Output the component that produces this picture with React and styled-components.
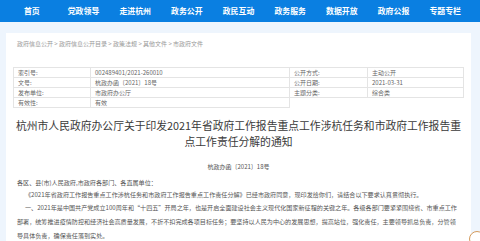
import React from "react";
import styled, { createGlobalStyle } from "styled-components";

const navItems = ["首页", "党政领导", "走进杭州", "政务公开", "政民互动", "政务服务", "数据开放", "政府公报", "专题专栏"];

const leftRows = [
  ["索引号:", "002489401/2021-260010"],
  ["文号:", "杭政办函〔2021〕18号"],
  ["发布单位:", "市政府办公厅"],
  ["有效性:", "有效"],
];

const rightRows = [
  ["公开方式:", "主动公开"],
  ["公开日期:", "2021-03-31"],
  ["主题分类:", "综合类"],
];

export default function App() {
  return (
    <>
      <GlobalStyle />
      <NavBar>
        <NavInner>
          {navItems.map((item) => (
            <NavItem key={item}>{item}</NavItem>
          ))}
        </NavInner>
      </NavBar>
      <Main>
        <Panel>
          <Breadcrumb>政府信息公开 &gt; 政府信息公开目录 &gt; 政策法规 &gt; 其他文件 &gt; 市政府文件</Breadcrumb>
          <MetaWrap>
            <MetaTable>
              <tbody>
                {leftRows.map(([k, v]) => (
                  <tr key={k}>
                    <LabelCell $w={77}>{k}</LabelCell>
                    <ValueCell $w={199}>{v}</ValueCell>
                  </tr>
                ))}
              </tbody>
            </MetaTable>
            <MetaTable $side>
              <tbody>
                {rightRows.map(([k, v]) => (
                  <tr key={k}>
                    <LabelCell $w={78}>{k}</LabelCell>
                    <ValueCell $w={96}>{v}</ValueCell>
                  </tr>
                ))}
              </tbody>
            </MetaTable>
          </MetaWrap>
          <Title>
            杭州市人民政府办公厅关于印发2021年省政府工作报告重点工作涉杭任务和市政府工作报告重
            <br />
            点工作责任分解的通知
          </Title>
          <DocNo>杭政办函〔2021〕18号</DocNo>
          <Body>
            <Salutation>各区、县(市)人民政府,市政府各部门、各直属单位：</Salutation>
            <Para $lh={12}>
              《2021年省政府工作报告重点工作涉杭任务和市政府工作报告重点工作责任分解》已经市政府同意，现印发给你们，请结合以下要求认真贯彻执行。
            </Para>
            <Para $lh={14}>
              一、2021年是中国共产党成立100周年和“十四五”开局之年，也是开启全面建设社会主义现代化国家新征程的关键之年。各级各部门要紧紧围绕省、市重点工作部署，统筹推进疫情防控和经济社会高质量发展，不折不扣完成各项目标任务；要坚持以人民为中心的发展思想，提高站位，强化责任，主要领导抓总负责，分管领导具体负责，确保责任落到实处。
            </Para>
          </Body>
        </Panel>
      </Main>
      <FloatRing />
    </>
  );
}

const GlobalStyle = createGlobalStyle`
  body {
    margin: 0;
    background: #eef5fd;
    font-family: "Noto Sans CJK SC", "Noto Sans", sans-serif;
    overflow: hidden;
  }
`;

const NavBar = styled.div`
  background: #0a7fe1;
  height: 22px;
`;

const NavInner = styled.div`
  margin-left: 6px;
  width: 465px;
  display: grid;
  grid-template-columns: repeat(9, 1fr);
`;

const NavItem = styled.div`
  color: #fff;
  font-size: 7.9px;
  font-weight: bold;
  line-height: 22px;
  text-align: center;
`;

const Main = styled.div`
  padding: 11px 0 0 6px;
`;

const Panel = styled.div`
  background: #fff;
  width: 465px;
  height: 230px;
`;

const Breadcrumb = styled.div`
  padding: 7px 0 0 11px;
  font-size: 6px;
  line-height: 8px;
  color: #999;
`;

const MetaWrap = styled.div`
  display: flex;
  align-items: flex-start;
  margin: 19px 0 0 7px;
`;

const MetaTable = styled.table`
  border-collapse: collapse;
  margin-left: ${(p) => (p.$side ? "-1px" : "0")};
  td {
    border: 1px solid #e4e4e4;
    height: 9px;
    padding: 0 0 0 4px;
    font-size: 6px;
    line-height: 9px;
    color: #666;
    white-space: nowrap;
  }
`;

const LabelCell = styled.td`
  width: ${(p) => p.$w - 5}px;
`;

const ValueCell = styled.td`
  width: ${(p) => p.$w - 5}px;
`;

const Title = styled.h1`
  margin: 9px 0 0;
  padding: 0 7px;
  font-size: 10.8px;
  font-weight: normal;
  line-height: 16px;
  color: #3a3a3a;
  text-align: center;
  white-space: nowrap;
`;

const DocNo = styled.div`
  margin-top: 13px;
  text-align: center;
  font-size: 6px;
  line-height: 10px;
  color: #555;
`;

const Body = styled.div`
  padding: 0 11px;
  margin-top: 5px;
  font-size: 6.1px;
  color: #555;
`;

const Salutation = styled.p`
  margin: 0;
  line-height: 12px;
`;

const Para = styled.p`
  margin: 0;
  line-height: ${(p) => p.$lh}px;
  text-indent: 8px;
`;

const FloatRing = styled.div`
  position: fixed;
  left: 469px;
  top: 231px;
  width: 14px;
  height: 14px;
  border-radius: 50%;
  border: 1.5px solid #d39a5c;
  background: #fff;
`;
